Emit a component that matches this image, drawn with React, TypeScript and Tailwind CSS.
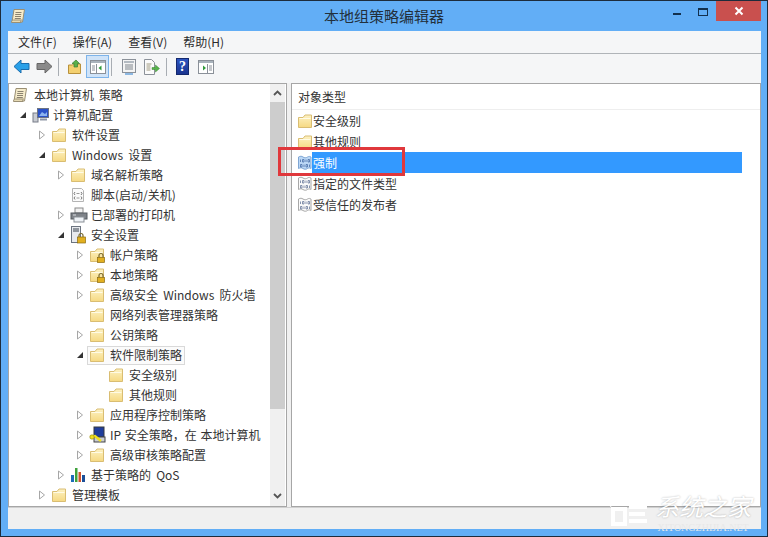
import React from "react";

const font = { fontFamily: '"Noto Sans CJK SC","Liberation Sans",sans-serif' };

function Folder({ lock = false }: { lock?: boolean }) {
  return (
    <svg width="16" height="16" viewBox="0 0 16 16" className="shrink-0">
      <defs>
        <linearGradient id="fg" x1="0" y1="0" x2="0" y2="1">
          <stop offset="0" stopColor="#fdf2c4" />
          <stop offset="1" stopColor="#f6d982" />
        </linearGradient>
      </defs>
      <path d="M1.500 4.500h4.500l2-2.500h6.500v12.500h-13z" fill="url(#fg)" stroke="#d9bd72" />
      <path d="M2.500 5.500h11" stroke="#fffbe6" />
      {lock && (
        <g>
          <path d="M10 10.500v-2a2 2 0 0 1 4 0v2" fill="none" stroke="#7a6a30" strokeWidth="1.200" />
          <rect x="8.500" y="10.500" width="7" height="5" fill="#e2b020" stroke="#8a6a10" strokeWidth="0.700" />
        </g>
      )}
    </svg>
  );
}

function Scroll() {
  return (
    <svg width="16" height="16" viewBox="0 0 16 16" className="shrink-0">
      <path d="M4 1.500h10.500l-2 12.500h-10.500z" fill="#f6eccb" stroke="#9a8f74" />
      <path d="M1.500 14.500c0-2 1-2.500 2-2.500h8c-1 .5-1 2-.5 2.500z" fill="#e6dab4" stroke="#9a8f74" />
      <path d="M5.500 4.500h6M5.200 6.500h6M5 8.500h6M4.800 10.500h6" stroke="#8a8270" />
    </svg>
  );
}

function Computer() {
  return (
    <svg width="18" height="16" viewBox="0 0 18 16" className="shrink-0">
      <rect x="1" y="6" width="5" height="9" fill="#c9ccd2" stroke="#777d88" />
      <rect x="5.500" y="1.500" width="11" height="9" fill="#2a52c8" stroke="#6c7484" />
      <path d="M7 9l3-4 3 2 2-2v4z" fill="#8cb4f0" />
      <path d="M8 12.500h7" stroke="#8e96a4" strokeWidth="2" />
    </svg>
  );
}

function ScriptIcon() {
  return (
    <svg width="16" height="16" viewBox="0 0 16 16" className="shrink-0">
      <path d="M2.500 1.500h9l2 2v11h-11z" fill="#fbfbfb" stroke="#b4b4b4" />
      <path d="M5 5l-1 1.500 1 1.500M11 5l1 1.500-1 1.500M5 9.500l-1 1.500 1 1.500M11 9.500l1 1.500-1 1.500" fill="none" stroke="#777" />
      <path d="M6.500 6.500h3M6.500 11h3" stroke="#999" />
    </svg>
  );
}

function Printer() {
  return (
    <svg width="18" height="16" viewBox="0 0 18 16" className="shrink-0">
      <rect x="5" y="1" width="8" height="5" fill="#f2f2f2" stroke="#8a8a8a" />
      <rect x="1" y="6" width="16" height="6" fill="#7e8288" stroke="#555a60" />
      <rect x="4" y="10" width="10" height="5" fill="#eef2f6" stroke="#8a8f96" />
      <path d="M3 8h3" stroke="#d8dce0" />
    </svg>
  );
}

function SecIcon() {
  return (
    <svg width="16" height="18" viewBox="0 0 16 18" className="shrink-0">
      <rect x="1.500" y="0.500" width="9" height="16" fill="#e8eaee" stroke="#6c7480" />
      <path d="M3 3h6M3 5h6" stroke="#39424f" strokeWidth="1.200" />
      <path d="M9 11V9.500a2 2 0 0 1 4 0V11" fill="none" stroke="#7a6a30" strokeWidth="1.200" />
      <rect x="7.500" y="11" width="8" height="6" fill="#e2b020" stroke="#8a6a10" strokeWidth="0.700" />
    </svg>
  );
}

function IpSec() {
  return (
    <svg width="18" height="18" viewBox="0 0 18 18" className="shrink-0">
      <rect x="5" y="1" width="10" height="10" fill="#1f3d9c" stroke="#34383f" />
      <rect x="5" y="11" width="11" height="5" fill="#c9ccd2" stroke="#444" />
      <path d="M1 11l5-1 6 5" fill="none" stroke="#f0e020" strokeWidth="2.400" />
      <circle cx="3" cy="11" r="2.200" fill="#f0e020" stroke="#8a8010" strokeWidth="0.600" />
    </svg>
  );
}

function QoS() {
  return (
    <svg width="16" height="16" viewBox="0 0 16 16" className="shrink-0">
      <rect x="1" y="8" width="3" height="7" fill="#1c6cb8" />
      <rect x="5" y="1" width="2.500" height="14" fill="#3fa23c" />
      <rect x="8.500" y="5" width="2.500" height="10" fill="#d2542e" />
      <rect x="12" y="8" width="3" height="7" fill="#1c4f98" />
    </svg>
  );
}

function BinDoc({ light = false }: { light?: boolean }) {
  return (
    <svg width="16" height="16" viewBox="0 0 16 16" className="shrink-0">
      <path
        d="M1.500 2c2-1 3-1 4.500 0s3 1 4.500 0 2.500-.5 3.500 0v11.500c-1-.5-2-1-3.500 0s-3 1-4.500 0-2.500-1-4.500 0z"
        fill={light ? "#bcd8f6" : "#fafafa"}
        stroke={light ? "#7fa6d4" : "#a8a8a8"}
      />
      <path
        d="M3.500 4.500v2.500M5.500 4.500h1.500v2.500H5.500zM9 4.500v2.500M11 4.500h1.500v2.500H11zM3.500 9.500h1.500v2.500H3.500zM7 9.500v2.500M9 9.500h1.500v2.500H9zM12.500 9.500v2.500"
        fill="none"
        stroke={light ? "#4a6ea8" : "#6a7a9c"}
        strokeWidth="0.800"
      />
    </svg>
  );
}

function Arrow({ open }: { open: boolean }) {
  return open ? (
    <svg width="8" height="8" viewBox="0 0 8 8"><path d="M7 1v6H1z" fill="#333" /></svg>
  ) : (
    <svg width="8" height="10" viewBox="0 0 8 10"><path d="M1.500 1l5 4-5 4z" fill="#fff" stroke="#a6a6a6" /></svg>
  );
}

type RowT = { d: number; t: string; icon: React.ReactNode; a?: "o" | "c"; sel?: boolean; tight?: boolean };

const rows: RowT[] = [
  { d: 1, t: "计算机配置", icon: <Computer />, a: "o" },
  { d: 2, t: "软件设置", icon: <Folder />, a: "c" },
  { d: 2, t: "Windows 设置", icon: <Folder />, a: "o" },
  { d: 3, t: "域名解析策略", icon: <Folder />, a: "c" },
  { d: 3, t: "脚本(启动/关机)", icon: <ScriptIcon /> },
  { d: 3, t: "已部署的打印机", icon: <Printer />, a: "c" },
  { d: 3, t: "安全设置", icon: <SecIcon />, a: "o" },
  { d: 4, t: "帐户策略", icon: <Folder lock />, a: "c" },
  { d: 4, t: "本地策略", icon: <Folder lock />, a: "c" },
  { d: 4, t: "高级安全 Windows 防火墙", icon: <Folder />, a: "c" },
  { d: 4, t: "网络列表管理器策略", icon: <Folder /> },
  { d: 4, t: "公钥策略", icon: <Folder />, a: "c" },
  { d: 4, t: "软件限制策略", icon: <Folder />, a: "o", sel: true },
  { d: 5, t: "安全级别", icon: <Folder /> },
  { d: 5, t: "其他规则", icon: <Folder /> },
  { d: 4, t: "应用程序控制策略", icon: <Folder />, a: "c" },
  { d: 4, t: "IP 安全策略，在 本地计算机", icon: <IpSec />, a: "c", tight: true },
  { d: 4, t: "高级审核策略配置", icon: <Folder />, a: "c" },
  { d: 3, t: "基于策略的 QoS", icon: <QoS />, a: "c" },
  { d: 2, t: "管理模板", icon: <Folder />, a: "c" },
];

const depthPad: Record<number, string> = {
  1: "pl-[10px]",
  2: "pl-[29px]",
  3: "pl-[48px]",
  4: "pl-[67px]",
  5: "pl-[86px]",
};

function TreeRow({ r }: { r: RowT }) {
  return (
    <div className={`flex h-5 items-center ${depthPad[r.d]}`}>
      <span className="flex w-[12px] shrink-0 items-center justify-start">
        {r.a && <Arrow open={r.a === "o"} />}
      </span>
      <span
        className={`-ml-[1px] flex h-[19px] items-center border pl-[1px] pr-[2px] ${
          r.sel ? "border-[#d9d9d9] bg-[#fbfbfb]" : "border-transparent"
        }`}
      >
        <span className="flex w-[18px] shrink-0 items-center justify-start">{r.icon}</span>
        <span className={`ml-[3px] whitespace-nowrap ${r.tight ? "[word-spacing:1px]" : "[word-spacing:2.5px]"}`}>{r.t}</span>
      </span>
    </div>
  );
}

function Tb({ children, active, cls = "" }: { children: React.ReactNode; active?: boolean; cls?: string }) {
  return (
    <span
      className={`flex h-[23px] w-[23px] shrink-0 items-center justify-center border ${cls} ${
        active ? "border-[#7eb4ea] bg-[#cfe3f8]" : "border-transparent"
      }`}
    >
      {children}
    </span>
  );
}

function Sep({ cls }: { cls: string }) {
  return <span className={`mt-[3px] h-[18px] w-px shrink-0 bg-[#a8adb3] ${cls}`} />;
}

function PaneIcon({ arrow }: { arrow: "l" | "r" }) {
  return (
    <svg width="16" height="14" viewBox="0 0 16 14">
      <rect x="0.500" y="0.500" width="15" height="13" fill="#fff" stroke="#8b9199" />
      <path d="M1 1h14v2H1z" fill="#a9b3bc" />
      <path d={arrow === "l" ? "M11.500 5.500v5l-3-2.500z" : "M5 5.500v5l3-2.500z"} fill="#2f9a3a" />
      <path d={arrow === "l" ? "M6.500 4v9M2 6h3M2 8h3M2 10h3" : "M9.500 4v9M11 6h3M11 8h3M11 10h3"} stroke="#8b9199" />
    </svg>
  );
}

export default function App() {
  return (
    <div
      className="relative flex h-[537px] w-[768px] flex-col overflow-hidden border border-[#1d2c3c] bg-[#62aef6] text-[12px] text-[#333]"
      style={font}
    >
      {/* title bar */}
      <div className="relative flex h-[30px] shrink-0 items-center justify-center">
        <span className="absolute left-[9px] top-[7px]"><Scroll /></span>
        <span className="text-[15px] text-[#22303c]">本地组策略编辑器</span>
        <div className="absolute right-[6px] top-0 flex items-start">
          <span className="flex h-[20px] w-[26px] items-start justify-center pt-[12px]">
            <span className="h-[2px] w-[8px] bg-[#12304e]" />
          </span>
          <span className="flex h-[20px] w-[26px] items-start justify-center pt-[7px]">
            <span className="h-[8px] w-[10px] border border-t-2 border-[#12304e]" />
          </span>
          <span className="flex h-[20px] w-[45px] items-center justify-center bg-[#c9504e]">
            <svg width="10" height="10" viewBox="0 0 10 10">
              <path d="M1.500 1.500l7 7M8.500 1.500l-7 7" stroke="#fff" strokeWidth="2" />
            </svg>
          </span>
        </div>
      </div>

      {/* client */}
      <div className="ml-[7px] mr-[6px] flex min-h-0 flex-1 flex-col bg-[#f0f0f0]">
        <div className="flex h-[23px] shrink-0 items-center gap-[16px] border-b border-[#b0b4b8] bg-[#f5f6f7] pl-[10px] text-[12px] text-[#2c2c2c]">
          <span>文件(F)</span>
          <span>操作(A)</span>
          <span>查看(V)</span>
          <span>帮助(H)</span>
        </div>

        {/* toolbar */}
        <div className="flex h-[29px] shrink-0 items-start bg-[#f5f6f7] pl-[2px] pt-[1px]">
          <Tb>
            <svg width="17" height="15" viewBox="0 0 17 15">
              <path d="M8 1L1 7.500l7 6.500v-3.500h8v-6H8z" fill="#29a0e8" stroke="#1a6cad" />
            </svg>
          </Tb>
          <Tb>
            <svg width="17" height="15" viewBox="0 0 17 15">
              <path d="M9 1l7 6.500-7 6.500v-3.500H1v-6h8z" fill="#8a8a8a" stroke="#666" />
            </svg>
          </Tb>
          <Sep cls="ml-[2px]" />
          <Tb cls="ml-[4px]">
            <svg width="16" height="16" viewBox="0 0 16 16">
              <path d="M1.500 6h4l1-1h7v9.500h-12z" fill="#f3d070" stroke="#b8913c" />
              <path d="M9 1l3.500 3.500H10.500V8H7V4.500H5z" fill="#59b04a" stroke="#3a8030" strokeWidth="0.700" />
            </svg>
          </Tb>
          <Tb active><PaneIcon arrow="l" /></Tb>
          <Sep cls="ml-[2px]" />
          <Tb cls="ml-[5px]">
            <svg width="16" height="16" viewBox="0 0 16 16">
              <rect x="1.500" y="0.500" width="13" height="13" fill="#f4f4f4" stroke="#8b9199" />
              <rect x="3" y="2" width="10" height="2" fill="#b3bac1" />
              <path d="M4 6h8M4 8h8M4 10h8" stroke="#7e858c" />
              <path d="M4 15h8" stroke="#8db8e2" strokeWidth="2" />
            </svg>
          </Tb>
          <Tb>
            <svg width="17" height="16" viewBox="0 0 17 16">
              <path d="M1.500 .5h7l3 3v12h-10z" fill="#fbfbfb" stroke="#8b9199" />
              <path d="M3.500 5h5M3.500 7h4M3.500 9h4M3.500 11h4" stroke="#a09a80" />
              <path d="M9 8.500h3.500V6l4 3.500-4 3.500v-2.500H9z" fill="#55b54a" stroke="#3a8030" strokeWidth="0.500" />
            </svg>
          </Tb>
          <Sep cls="ml-[3px]" />
          <Tb cls="ml-[4px]">
            <span
              className="flex h-[17px] w-[13px] items-center justify-center border border-[#14296e] bg-gradient-to-b from-[#2d55c0] to-[#1a3490] text-[14px] font-bold leading-none text-white"
              style={{ fontFamily: '"Liberation Serif",serif' }}
            >
              ?
            </span>
          </Tb>
          <Tb><PaneIcon arrow="r" /></Tb>
        </div>

        {/* panes */}
        <div className="flex min-h-0 flex-1 gap-[4px] bg-[#f0f0f0]">
          <div className="flex w-[279px] shrink-0 border border-[#a6a6a6] bg-white text-[#333]">
            <div className="min-w-0 flex-1 overflow-hidden pt-[1px]">
              <div className="flex h-5 items-center pl-[3px]">
                <span className="flex w-[18px] shrink-0 justify-start"><Scroll /></span>
                <span className="ml-[4px] whitespace-nowrap [word-spacing:2px]">本地计算机 策略</span>
              </div>
              {rows.map((r, i) => (
                <TreeRow key={i} r={r} />
              ))}
            </div>
            <div className="mr-[1px] flex w-[15px] shrink-0 flex-col bg-[#f0f0f0]">
              <span className="flex h-[18px] shrink-0 items-center justify-center">
                <svg width="9" height="6" viewBox="0 0 9 6"><path d="M1 5l3.500-3.500L8 5" fill="none" stroke="#555" strokeWidth="1.800" /></svg>
              </span>
              <span className="h-[307px] shrink-0 bg-[#cdcdcd]" />
              <span className="flex-1" />
              <span className="flex h-[20px] shrink-0 items-center justify-center">
                <svg width="9" height="6" viewBox="0 0 9 6"><path d="M1 1l3.500 3.500L8 1" fill="none" stroke="#555" strokeWidth="1.800" /></svg>
              </span>
            </div>
          </div>

          <div className="min-w-0 flex-1 border border-[#a6a6a6] bg-white">
            <div className="flex h-[25px] items-center pl-[6px] pt-[1px]">对象类型</div>
            <div className="h-px bg-[#eeeeee]" />
            <div className="flex flex-col pl-[5px]">
              {[
                { t: "安全级别", i: <Folder /> },
                { t: "其他规则", i: <Folder /> },
                { t: "强制", i: <BinDoc light />, s: true },
                { t: "指定的文件类型", i: <BinDoc /> },
                { t: "受信任的发布者", i: <BinDoc /> },
              ].map((r, i) => (
                <div key={i} className="flex h-[21px] items-center">
                  <span className="flex w-[16px] shrink-0 justify-center">{r.i}</span>
                  <span
                    className={`flex h-[21px] items-center ${
                      r.s ? "-ml-[1px] w-[430px] bg-[#3399ff] pl-[1px] text-white" : ""
                    }`}
                  >
                    {r.t}
                  </span>
                </div>
              ))}
            </div>
          </div>
        </div>

        <div className="h-[22px] shrink-0 border-t border-[#d0d0d0] bg-[#f0f0f0]" />
      </div>
      <div className="h-[7px] shrink-0" />

      {/* red annotation */}
      <div className="absolute left-[277px] top-[146px] h-[29px] w-[127px] border-[3px] border-[#e0383c]" />

      {/* watermark */}
      <div className="pointer-events-none absolute left-[606px] top-[482px] flex items-start text-white">
        <svg width="48" height="45" viewBox="0 0 48 45">
          <path d="M2 22L22 6l18 12" fill="none" stroke="#fff" strokeWidth="5" />
          <path d="M6 26h12v15H6zM22 24h18M22 31h16M22 38h18" fill="none" stroke="#fff" strokeWidth="4" />
        </svg>
        <div className="flex flex-col items-center">
          <span className="mt-[8px] text-[24px] italic leading-[30px] [text-shadow:0_0_2px_rgba(0,0,0,0.3)]">系统之家</span>
          <span className="mt-[1px] text-[10px] leading-[12px] text-[#e8e8e8]" style={{ fontFamily: '"Liberation Serif",serif' }}>XITONGZHIJIA.NET</span>
        </div>
      </div>
    </div>
  );
}
